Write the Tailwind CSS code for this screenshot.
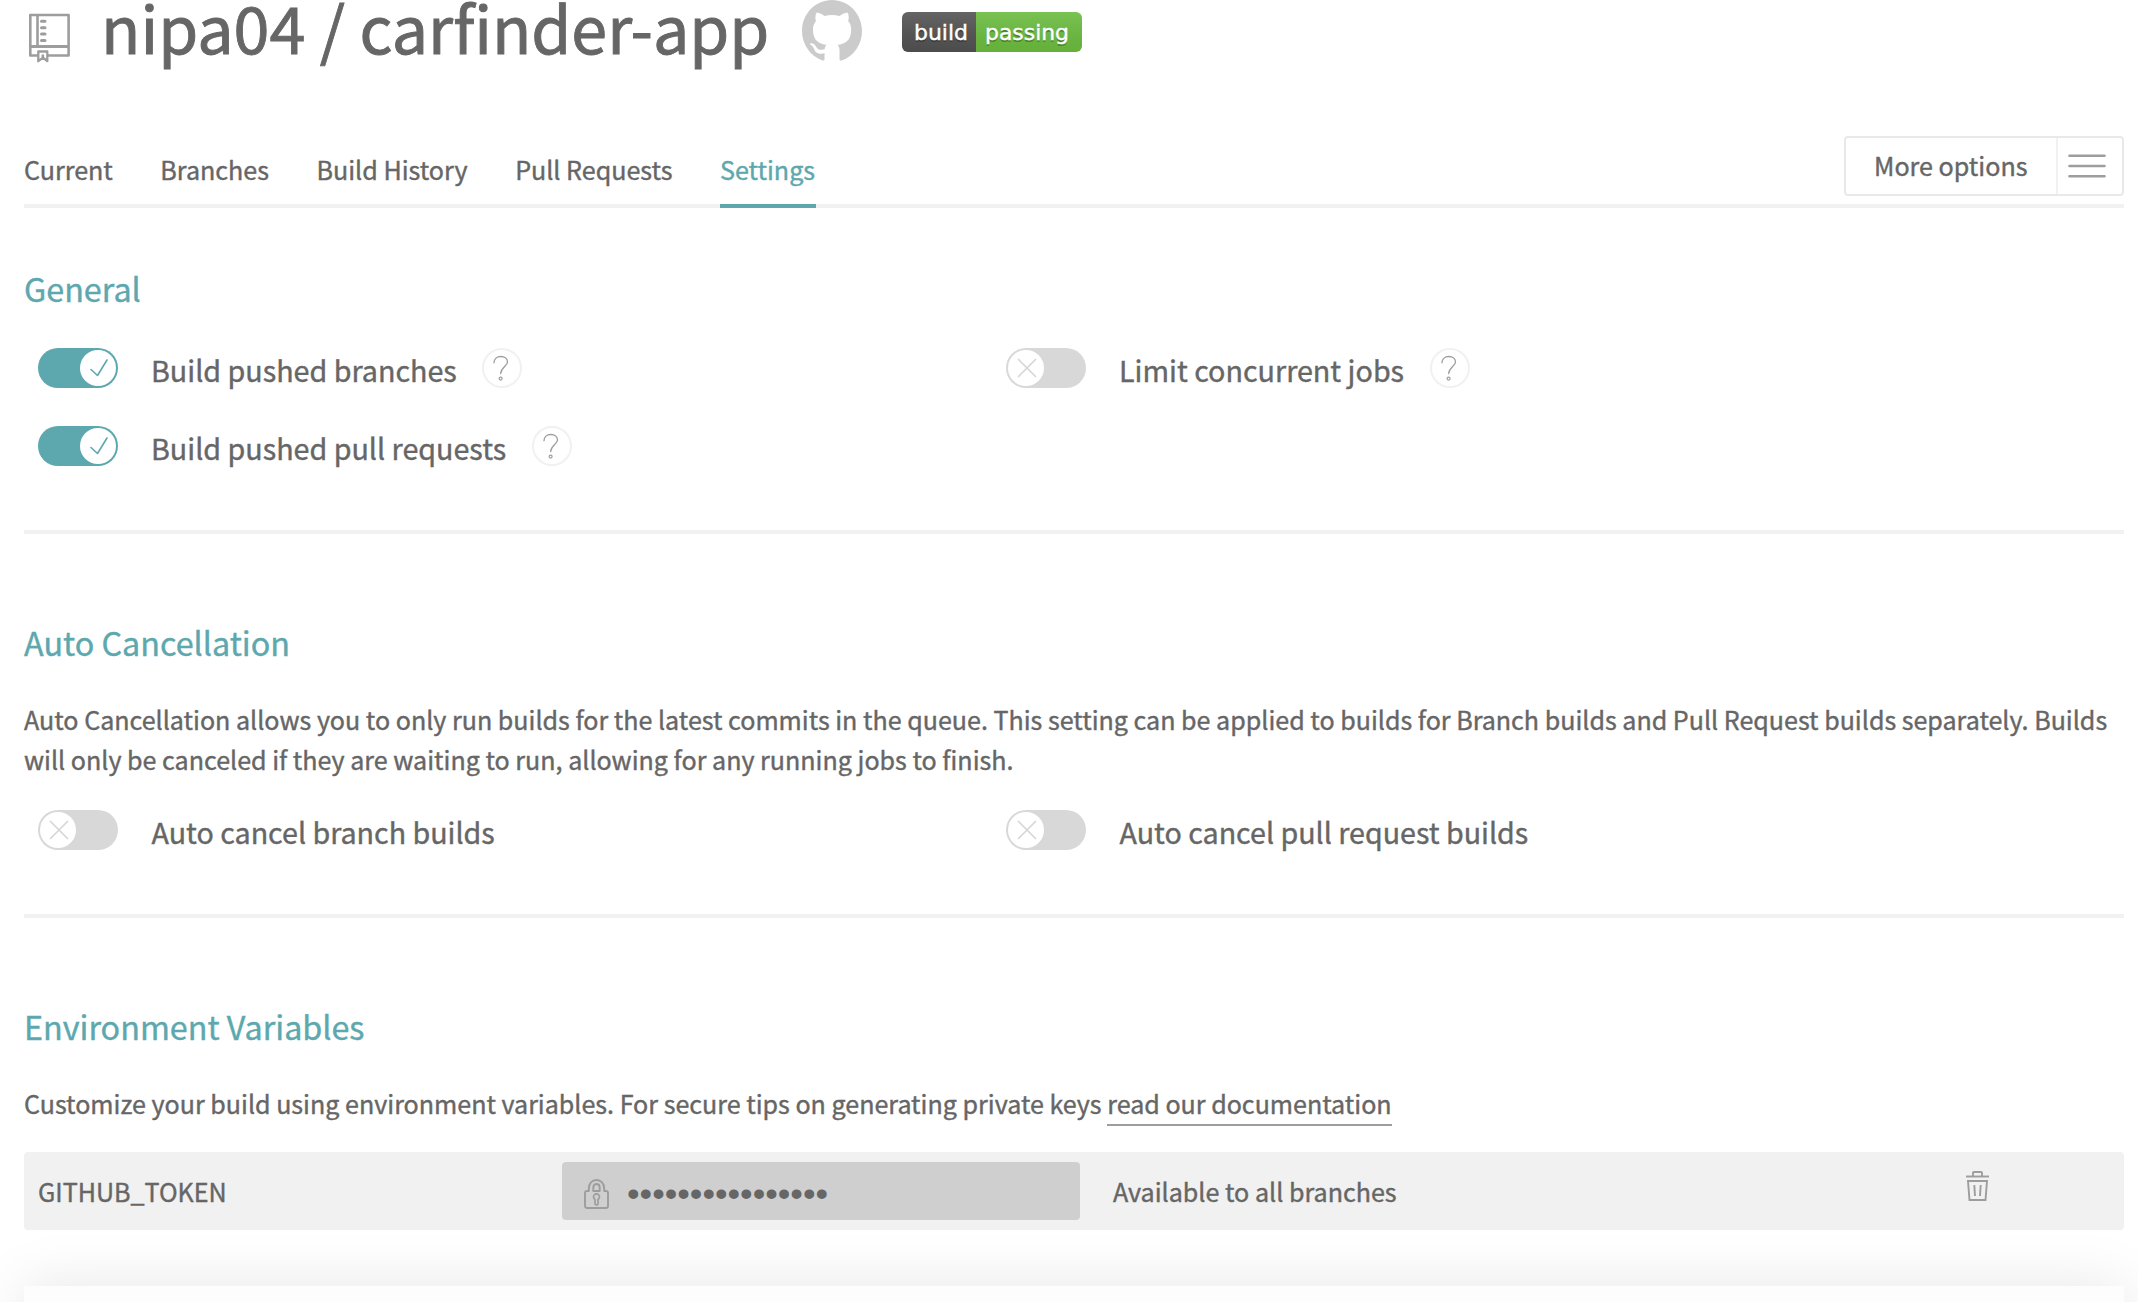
<!DOCTYPE html>
<html lang="en">
<head>
<meta charset="utf-8">
<title>nipa04 / carfinder-app - Settings</title>
<script src="https://cdn.jsdelivr.net/npm/@tailwindcss/browser@4"></script>
</head>
<body class="bg-white">
<svg class="hidden">
  <symbol id="check" viewBox="0 0 18 18"><path d="M1 10.5l6.500 6L17 1" fill="none" stroke="#5da8ae" stroke-width="1.600" stroke-linecap="round" stroke-linejoin="round"/></symbol>
  <symbol id="cross" viewBox="0 0 20 20"><path d="M1.500 1.500l17 17M18.500 1.500l-17 17" fill="none" stroke="#d6d6d6" stroke-width="1.700" stroke-linecap="round"/></symbol>
  <symbol id="question" viewBox="0 0 16 26"><path d="M1 7.800C1 3.800 4 1.500 7.800 1.500c4 0 6.700 2.300 6.700 5.500 0 4-6.500 5.500-6.800 11.500" fill="none" stroke="#9d9d9d" stroke-width="1.300" stroke-linecap="round"/><circle cx="7.600" cy="23.600" r="1.500" fill="none" stroke="#9d9d9d" stroke-width="1.200"/></symbol>
</svg>
<div class="h-[1302px] w-[2138px] overflow-hidden pl-6 pr-[14px] font-['Noto_Sans_CJK_SC','Open_Sans',sans-serif] text-[25.100px] text-[#666] [-webkit-text-stroke:0.4px]">

  <header class="flex h-[136px] items-start">
    <svg class="mt-3 ml-1 h-[52px] w-[44px]" viewBox="0 0 44 52" fill="none" stroke="#9d9d9d" stroke-width="2.600" stroke-linejoin="round">
      <path d="M10 43.500H2.300V3h38.300v40.500H20"/><path d="M9.500 3v31.500"/><path d="M2.300 34.500h38.300" stroke-width="2.900"/>
      <path d="M13.500 9.300h3.500M13.500 15.700h3.500M13.500 22h3.500M13.500 28.500h3.500" stroke-width="3" stroke-linecap="round"/>
      <path d="M10.300 39.500h9v9.700l-4.300-3.600-4.700 3.600z" stroke-width="2.300"/><path d="M14.800 42.500v3"/>
    </svg>
    <h1 class="ml-[29px] w-[698px] whitespace-nowrap text-[64.600px] leading-[52px] [-webkit-text-stroke:0.9px]">nipa04 / carfinder-app</h1>
    <svg class="ml-[3px] h-[61px] w-[60px]" viewBox="0 0 16 15.700" preserveAspectRatio="none" fill="#cbcbcb"><path d="M8 0C3.580 0 0 3.580 0 8c0 3.540 2.290 6.530 5.470 7.590.4.070.55-.17.55-.38 0-.19-.01-.82-.01-1.490-2.010.37-2.530-.49-2.690-.94-.09-.23-.48-.94-.82-1.130-.28-.15-.68-.52-.01-.53.63-.01 1.080.58 1.230.82.72 1.210 1.870.87 2.330.66.07-.52.28-.87.51-1.070-1.780-.2-3.640-.89-3.640-3.950 0-.87.31-1.590.82-2.150-.08-.2-.36-1.020.08-2.120 0 0 .67-.21 2.200.82.64-.18 1.320-.27 2-.27s1.360.09 2 .27c1.530-1.040 2.200-.82 2.200-.82.44 1.100.16 1.920.08 2.120.51.56.82 1.270.82 2.150 0 3.070-1.870 3.750-3.650 3.950.29.25.54.73.54 1.480 0 1.070-.01 1.930-.01 2.200 0 .21.15.46.55.38A8.010 8.010 0 0 0 16 8c0-4.420-3.580-8-8-8z"/></svg>
    <svg class="mt-3 ml-10 h-10 w-[180px] [-webkit-text-stroke:0]" viewBox="0 0 90 20">
      <defs>
        <linearGradient id="shine" x2="0" y2="100%"><stop offset="0" stop-color="#bbb" stop-opacity=".15"/><stop offset="1" stop-opacity=".1"/></linearGradient>
        <clipPath id="round"><rect width="90" height="20" rx="3"/></clipPath>
      </defs>
      <g clip-path="url(#round)"><path fill="#555" d="M0 0h37v20H0z"/><path fill="#6fc441" d="M37 0h53v20H37z"/><path fill="url(#shine)" d="M0 0h90v20H0z"/></g>
      <g fill="#fff" text-anchor="middle" font-family="'DejaVu Sans',sans-serif" font-size="11">
        <text x="19.500" y="15" fill="#010101" fill-opacity=".3" textLength="27" lengthAdjust="spacingAndGlyphs">build</text><text x="19.500" y="14" textLength="27" lengthAdjust="spacingAndGlyphs" stroke="#fff" stroke-width=".2">build</text>
        <text x="62.500" y="15" fill="#010101" fill-opacity=".3" textLength="42" lengthAdjust="spacingAndGlyphs">passing</text><text x="62.500" y="14" textLength="42" lengthAdjust="spacingAndGlyphs" stroke="#fff" stroke-width=".2">passing</text>
      </g>
    </svg>
  </header>

  <div class="flex h-[72px] items-start justify-between border-b-4 border-[#f1f1f1]">
    <nav class="flex gap-[47.500px] pt-[13px] leading-10">
      <a class="h-[59px]">Current</a>
      <a class="h-[59px]">Branches</a>
      <a class="h-[59px]">Build History</a>
      <a class="h-[59px]">Pull Requests</a>
      <a class="h-[59px] w-24 border-b-4 border-[#5da8ae] text-[#5da8ae]">Settings</a>
    </nav>
    <div class="flex h-[60px] w-[280px] rounded border-2 border-[#e9e9e9]">
      <span class="w-[210px] pl-7 leading-[54px]">More options</span>
      <span class="flex flex-1 items-start border-l-2 border-[#f1f1f1] pt-4 pl-[10px]">
        <svg class="h-6 w-[38px]" viewBox="0 0 38 24" stroke="#9d9d9d" stroke-width="2.600" stroke-linecap="round"><path d="M1.500 1.700h35M1.500 12h35M1.500 22.300h35"/></svg>
      </span>
    </div>
  </div>

  <section class="border-b-4 border-[#f1f1f1] pt-[60px] pb-16">
    <h2 class="text-[32.300px] leading-10 text-[#5da8ae]">General</h2>
    <div class="mt-10 grid grid-cols-[968px_1fr] gap-y-[38px] pl-[14px] text-[28.700px]">
      <div class="flex h-10 items-start">
        <span class="flex h-10 w-20 justify-end rounded-full bg-[#5da8ae] p-0.5"><span class="flex size-9 items-center justify-center rounded-full bg-white pl-0.5"><svg class="size-[18px]"><use href="#check"/></svg></span></span>
        <span class="ml-[33px] leading-[43px]">Build pushed branches</span>
        <span class="ml-[25px] flex size-10 justify-center rounded-full border-2 border-[#f1f1f1] pt-[5px] pr-0.5"><svg class="h-[26px] w-4"><use href="#question"/></svg></span>
      </div>
      <div class="flex h-10 items-start">
        <span class="flex h-10 w-20 rounded-full bg-[#d8d8d8] p-0.5"><span class="flex size-9 items-center justify-center rounded-full bg-white pl-0.5"><svg class="size-5"><use href="#cross"/></svg></span></span>
        <span class="ml-[33px] leading-[43px]">Limit concurrent jobs</span>
        <span class="ml-[26px] flex size-10 justify-center rounded-full border-2 border-[#f1f1f1] pt-[5px] pr-0.5"><svg class="h-[26px] w-4"><use href="#question"/></svg></span>
      </div>
      <div class="flex h-10 items-start">
        <span class="flex h-10 w-20 justify-end rounded-full bg-[#5da8ae] p-0.5"><span class="flex size-9 items-center justify-center rounded-full bg-white pl-0.5"><svg class="size-[18px]"><use href="#check"/></svg></span></span>
        <span class="ml-[33px] leading-[43px]">Build pushed pull requests</span>
        <span class="ml-[26px] flex size-10 justify-center rounded-full border-2 border-[#f1f1f1] pt-[5px] pr-0.5"><svg class="h-[26px] w-4"><use href="#question"/></svg></span>
      </div>
    </div>
  </section>

  <section class="border-b-4 border-[#f1f1f1] pt-[88px] pb-16">
    <h2 class="text-[32.300px] leading-10 text-[#5da8ae]">Auto Cancellation</h2>
    <p class="mt-[37px] whitespace-nowrap text-[25.070px] leading-10">Auto Cancellation allows you to only run builds for the latest commits in the queue. This setting can be applied to builds for Branch builds and Pull Request builds separately. Builds<br>will only be canceled if they are waiting to run, allowing for any running jobs to finish.</p>
    <div class="mt-[31px] grid grid-cols-[968px_1fr] pl-[14px] text-[28.650px]">
      <div class="flex h-10 items-start">
        <span class="flex h-10 w-20 rounded-full bg-[#d8d8d8] p-0.5"><span class="flex size-9 items-center justify-center rounded-full bg-white pl-0.5"><svg class="size-5"><use href="#cross"/></svg></span></span>
        <span class="ml-[33.500px] leading-[43px]">Auto cancel branch builds</span>
      </div>
      <div class="flex h-10 items-start">
        <span class="flex h-10 w-20 rounded-full bg-[#d8d8d8] p-0.5"><span class="flex size-9 items-center justify-center rounded-full bg-white pl-0.5"><svg class="size-5"><use href="#cross"/></svg></span></span>
        <span class="ml-[33.500px] leading-[43px]">Auto cancel pull request builds</span>
      </div>
    </div>
  </section>

  <section class="pt-[88px]">
    <h2 class="text-[32.300px] leading-10 text-[#5da8ae]">Environment Variables</h2>
    <p class="mt-[37px] whitespace-nowrap text-[25.070px] leading-10">Customize your build using environment variables. For secure tips on generating private keys <a class="border-b-2 border-[#9d9d9d] pb-[3px]">read our documentation</a></p>
    <div class="mt-[29px] flex h-[78px] items-start rounded bg-[#f1f1f1] pl-[14px] leading-[78px]">
      <span class="w-[524px]">GITHUB_TOKEN</span>
      <span class="mt-[10px] flex h-[58px] w-[518px] items-start rounded bg-[#cfcfcf] pl-[22px]">
        <svg class="mt-[17px] h-[30px] w-[25px]" viewBox="0 0 25 30" fill="none" stroke="#9d9d9d" stroke-width="1.900" stroke-linejoin="round">
          <path d="M4.800 12V9.500C4.800 4.500 8 1 12.500 1s7.700 3.500 7.700 8.500V12H22a2 2 0 0 1 2 2v13a2 2 0 0 1-2 2H3a2 2 0 0 1-2-2V14a2 2 0 0 1 2-2z"/>
          <path d="M9.300 12V8.500C9.300 6.500 10.500 5 12.500 5s3.200 1.500 3.200 3.500V12z"/>
          <path d="M11 20.500a3 3 0 1 1 3 0v4a1.500 1.500 0 0 1-3 0z" stroke-width="1.700"/>
        </svg>
        <span class="ml-[18px] font-['Liberation_Sans',sans-serif] text-[35.900px] leading-[64px] [-webkit-text-stroke:0]">••••••••••••••••</span>
      </span>
      <span class="ml-[33px] w-[853px]">Available to all branches</span>
      <svg class="mt-[19px] h-[30px] w-[23px]" viewBox="0 0 23 30" fill="none" stroke="#9d9d9d" stroke-width="1.900">
        <path d="M0 5.500h23"/><path d="M7 5.500V2q0-1 1-1h7q1 0 1 1v3.500"/><path d="M2 10h19l-1.500 19h-16z"/><path d="M8.300 14l.7 11M14.700 14l-.7 11"/>
      </svg>
    </div>
  </section>

  <div class="mt-14 h-40 bg-[#fdfdfd] shadow-[0_0_60px_rgba(0,0,0,0.1)]"></div>
</div>
</body>
</html>
